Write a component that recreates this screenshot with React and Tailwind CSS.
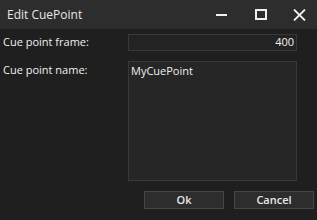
export default function App() {
  return (
    <div className="w-[317px] h-[220px] bg-[#1f1f1f] text-[#f0f0f0] flex flex-col overflow-hidden" style={{ fontFamily: '"Open Sans", "Noto Sans", sans-serif' }}>
      {/* title bar */}
      <div className="h-[29px] bg-[#2d2d2d] flex items-center shrink-0">
        <span className="pl-[7px] text-[12px] text-[#e8e8e8] flex-1">Edit CuePoint</span>
        <div className="flex items-center h-full">
          <div className="w-[40px] h-full flex items-center justify-center">
            <svg width="11" height="2" viewBox="0 0 11 2"><rect width="11" height="2" fill="#f0f0f0" /></svg>
          </div>
          <div className="w-[40px] h-full flex items-center justify-center">
            <svg width="12" height="11" viewBox="0 0 12 11"><rect x="1" y="1" width="10" height="9" fill="none" stroke="#f0f0f0" strokeWidth="2" /></svg>
          </div>
          <div className="w-[36px] h-full flex items-center justify-center">
            <svg width="13" height="12" viewBox="0 0 13 12"><path d="M1 0.5L12 11.5M12 0.5L1 11.5" stroke="#f0f0f0" strokeWidth="1.8" /></svg>
          </div>
        </div>
      </div>

      {/* form */}
      <div className="flex flex-col pt-[5px] pl-[3px] pr-[20px]">
        <div className="flex items-center h-[17px]">
          <span className="w-[125px] text-[11px] font-medium">Cue point frame:</span>
          <div className="w-[169px] h-[17px] bg-[#232323] border border-[#383838] flex items-center justify-end pr-[2px] text-[11px] font-medium">400</div>
        </div>
        <div className="flex mt-[10px]">
          <span className="w-[125px] text-[11px] font-medium leading-[14px] pt-[2px]">Cue point name:</span>
          <div className="w-[169px] h-[120px] bg-[#262626] border border-[#383838] pl-[2px] pt-[1px] text-[11px] font-medium">MyCuePoint</div>
        </div>
      </div>

      {/* buttons */}
      <div className="flex justify-end gap-[10px] pr-[3px] mt-[10px]">
        <button className="w-[80px] h-[18px] bg-[#2d2d2d] border border-[#464646] text-[11px] font-semibold text-[#e8e8e8] flex items-center justify-center">Ok</button>
        <button className="w-[80px] h-[18px] bg-[#2d2d2d] border border-[#464646] text-[11px] font-semibold text-[#e8e8e8] flex items-center justify-center">Cancel</button>
      </div>
    </div>
  );
}
